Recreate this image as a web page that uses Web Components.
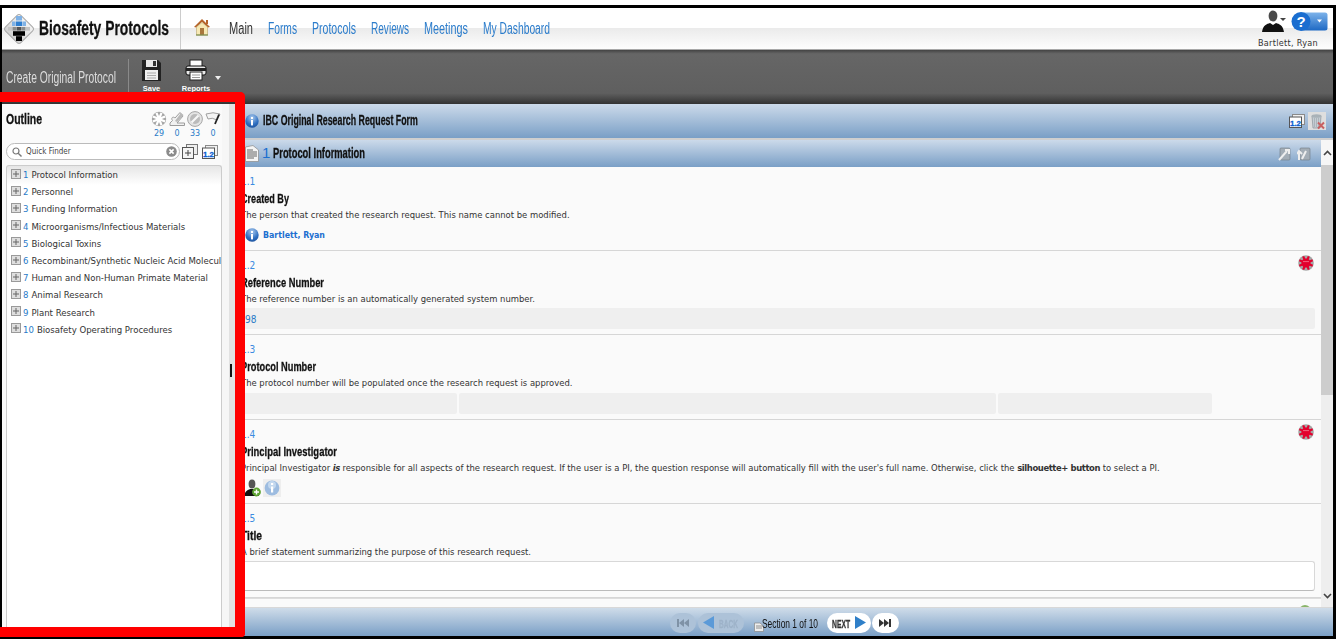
<!DOCTYPE html>
<html>
<head>
<meta charset="utf-8">
<title>Biosafety Protocols</title>
<style>
  html, body { margin: 0; padding: 0; background: #fff; }
  body { font-family: "DejaVu Sans", sans-serif; overflow: hidden; }
</style>
</head>
<body>
<app-shell>
  <top-bar slot="top"></top-bar>
  <action-bar slot="actions"></action-bar>
  <outline-panel slot="side">
    <tree-item num="1" label="Protocol Information"></tree-item>
    <tree-item num="2" label="Personnel"></tree-item>
    <tree-item num="3" label="Funding Information"></tree-item>
    <tree-item num="4" label="Microorganisms/Infectious Materials"></tree-item>
    <tree-item num="5" label="Biological Toxins"></tree-item>
    <tree-item num="6" label="Recombinant/Synthetic Nucleic Acid Molecules"></tree-item>
    <tree-item num="7" label="Human and Non-Human Primate Material"></tree-item>
    <tree-item num="8" label="Animal Research"></tree-item>
    <tree-item num="9" label="Plant Research"></tree-item>
    <tree-item num="10" label="Biosafety Operating Procedures"></tree-item>
  </outline-panel>
  <form-area slot="main">
    <form-row num="1.1" title="Created By" tw="48" desc="The person that created the research request. This name cannot be modified." style="--slot-top:4px">
      <person-value></person-value>
    </form-row>
    <form-row num="1.2" title="Reference Number" tw="83" desc="The reference number is an automatically generated system number." required>
      <field-box width="100%" style="padding:1px 0 0 4px">98</field-box>
    </form-row>
    <form-row num="1.3" title="Protocol Number" tw="75" desc="The protocol number will be populated once the research request is approved." style="--slot-top:3px;--row-h:85px">
      <div style="display:flex;gap:2px;width:971px">
        <field-box width="216px"></field-box>
        <field-box width="537px"></field-box>
        <field-box width="214px"></field-box>
      </div>
    </form-row>
    <form-row num="1.4" title="Principal Investigator" tw="96" required style="--slot-top:3px">
      <span slot="desc">Principal Investigator <b style="letter-spacing:-.5px"><i>is</i></b> responsible for all aspects of the research request. If the user is a PI, the question response will automatically fill with the user's full name. Otherwise, click the <b style="letter-spacing:-.4px">silhouette+ button</b> to select a PI.</span>
      <pi-tools></pi-tools>
    </form-row>
    <form-row num="1.5" title="Title" tw="21" desc="A brief statement summarizing the purpose of this research request." style="--row-h:94px">
      <text-box></text-box>
    </form-row>
  </form-area>
  <page-footer slot="main-foot"></page-footer>
</app-shell>

<script>
const narrow = '"Liberation Sans", sans-serif';
const body = '"DejaVu Sans", sans-serif';

// no condensed face is installed: squeeze the text to the width it has in the screenshot
const measure = document.createElement("canvas").getContext("2d");
class CondText extends HTMLElement {
  constructor() {
    super();
    this.shadow = this.attachShadow({ mode: "open" });
    const font = this.getAttribute("font");
    const w = +this.getAttribute("w");
    measure.font = font;
    const r = w / measure.measureText(this.textContent).width;
    // scaling thins the stems, so bold gets a little stroke back
    const stroke = font.startsWith("bold") ? "-webkit-text-stroke: .3px currentColor;" : "";
    this.shadow.innerHTML = `
    <style>
      :host { display: inline-block; width: ${w}px; white-space: nowrap; flex: none; }
      span { display: inline-block; font: ${font}; ${stroke} transform: scaleX(${r.toFixed(3)}); transform-origin: 0 0; }
    </style>
    <span><slot></slot></span>`;
  }
}
customElements.define("cond-text", CondText);

const spokes = (cx, cy, r, stroke, w, n = 8) => {
  let s = "";
  for (let i = 0; i < n; i++) {
    const a = i * 2 * Math.PI / n + Math.PI / n;
    s += `<line x1="${cx}" y1="${cy}" x2="${(cx + r * Math.cos(a)).toFixed(1)}" y2="${(cy + r * Math.sin(a)).toFixed(1)}" stroke="${stroke}" stroke-width="${w}"/>`;
  }
  return s;
};
const soft = `<defs><filter id="soft" x="-20%" y="-20%" width="140%" height="140%"><feGaussianBlur stdDeviation=".45"/></filter></defs>`;

const icons = {
  logo: `<svg viewBox="0 0 30 32" width="30" height="32">
    <defs><linearGradient id="lg" x1="0" y1="0" x2="0" y2="1"><stop offset="0" stop-color="#f4f4f4"/><stop offset="1" stop-color="#d0d0d0"/></linearGradient></defs>
    <rect x="4" y="5" width="22" height="22" rx="3" transform="rotate(45 15 16)" fill="url(#lg)" stroke="#a9a9a9"/>
    <rect x="12" y="3" width="6" height="4.5" fill="#7fb2e6"/>
    <rect x="8" y="8.5" width="3.6" height="4.5" fill="#7fb2e6"/><rect x="12" y="8.5" width="6" height="4.5" fill="#2f7fd0"/><rect x="18.4" y="8.5" width="3.6" height="4.5" fill="#7fb2e6"/>
    <rect x="4" y="14" width="4" height="3.6" fill="#c4c4c4"/><rect x="8.5" y="14" width="3.5" height="3.6" fill="#8a8a8a"/><rect x="12.5" y="14" width="5" height="3.6" fill="#555"/><rect x="18" y="14" width="3.5" height="3.6" fill="#8a8a8a"/><rect x="22" y="14" width="4" height="3.6" fill="#c4c4c4"/>
    <rect x="9" y="18.2" width="12" height="4.6" fill="#000"/><rect x="12" y="23.2" width="6" height="4.8" fill="#000"/>
  </svg>`,
  home: `<svg viewBox="0 0 18 18" width="18" height="18">
    <path d="M9 1 L1 9 L3 9.5 L9 4 L15 9.5 L17 9 Z" fill="#b5642a"/><rect x="13" y="2" width="2" height="4" fill="#b5642a"/>
    <path d="M3.5 9 L9 4.5 L14.5 9 V17 H3.5 Z" fill="#f7e9b4" stroke="#b8a36a" stroke-width=".6"/>
    <rect x="7" y="10" width="4" height="7" fill="#a9773d"/><rect x="3" y="16.4" width="12" height="1.2" fill="#7c8f52"/>
  </svg>`,
  save: `<svg viewBox="0 0 21 23" width="21" height="23">
    <path d="M1 1 H17 L20 4 V22 H1 Z" fill="#222"/><rect x="5" y="1" width="11" height="7" fill="#e8e8e8"/><rect x="12" y="2" width="3" height="5" fill="#333"/>
    <rect x="4" y="11" width="13" height="10" fill="#f0f0f0"/><path d="M6 14 H15 M6 16.5 H15 M6 19 H15" stroke="#aaa"/>
  </svg>`,
  print: `<svg viewBox="0 0 22 22" width="22" height="22">
    <rect x="5" y="1" width="12" height="7" fill="#fff" stroke="#222"/>
    <rect x="1" y="7" width="20" height="9" rx="2" fill="#e9e9e9" stroke="#111"/><rect x="1" y="9" width="20" height="3" fill="#222"/>
    <rect x="5" y="13" width="12" height="8" fill="#fff" stroke="#222"/><path d="M7 16 H15 M7 18.5 H15" stroke="#999"/>
  </svg>`,
  user: `<svg viewBox="0 0 24 22" width="24" height="22">
    <ellipse cx="11" cy="6" rx="4.4" ry="5.5" fill="#4a4a4a"/><path d="M0 22 C1 15 5 14 8 13 L11 15 L14 13 C17 14 21 15 22 22 Z" fill="#111"/>
    <path d="M18 8 H24 L21 11 Z" fill="#444"/>
  </svg>`,
  help: `<svg viewBox="0 0 37 19" width="37" height="19">
    <defs><linearGradient id="hb" x1="0" y1="0" x2="0" y2="1"><stop offset="0" stop-color="#7db3ea"/><stop offset="1" stop-color="#1e69c4"/></linearGradient></defs>
    <path d="M10 0.5 H34 Q36.5 .5 36.5 3 V16 Q36.5 18.5 34 18.5 H10 Z" fill="url(#hb)"/><circle cx="10" cy="9.5" r="9.5" fill="#1b6ed0"/>
    <text x="10" y="15" text-anchor="middle" font-family="Liberation Sans" font-weight="700" font-size="15" fill="#fff">?</text>
    <path d="M26 7.5 H31 L28.5 10.5 Z" fill="#fff"/>
  </svg>`,
  info: `<svg viewBox="0 0 14 14" width="14" height="14">
    <defs><radialGradient id="ii" cx=".5" cy=".25" r=".85"><stop offset="0" stop-color="#a8c9ee"/><stop offset=".6" stop-color="#2f6fc0"/><stop offset="1" stop-color="#1a4c95"/></radialGradient></defs>
    <circle cx="7" cy="7" r="6.7" fill="url(#ii)"/><rect x="6" y="6" width="2" height="5.4" fill="#fff"/><rect x="6" y="3" width="2" height="2" fill="#fff"/>
  </svg>`,
  infofade: `<svg viewBox="0 0 18 18" width="18" height="18"><rect width="18" height="18" fill="#eee"/>
    <circle cx="9" cy="9" r="7.4" fill="#9dbce0"/><circle cx="9" cy="6" r="4" fill="#c3d8ee"/><rect x="8" y="7.5" width="2.2" height="6" fill="#fff"/><rect x="8" y="4" width="2.2" height="2" fill="#fff"/>
  </svg>`,
  doc: `<svg viewBox="0 0 14 17" width="14" height="17">
    <path d="M.5 2 L8 .5 L13.5 5 V16.5 H.5 Z" fill="#f4f4f4" stroke="#8a8a8a" stroke-width=".7"/>
    <path d="M2 5 H8 M2 7 H12 M2 9 H12 M2 11 H12 M2 13 H9" stroke="#555" stroke-width=".9"/>
  </svg>`,
  number: `<svg viewBox="0 0 16 14" width="16" height="14">
    <rect x="3.5" y=".5" width="12" height="10" fill="#f1f1f1" stroke="#8a8a8a"/><rect x=".5" y="3" width="12" height="10.5" fill="#fff" stroke="#555"/>
    <text x="6.5" y="11.5" text-anchor="middle" font-family="Liberation Sans" font-weight="700" font-size="8" fill="#0b5cd0" stroke="#0b5cd0" stroke-width=".3">1.2</text>
  </svg>`,
  expandbox: `<svg viewBox="0 0 16 15" width="16" height="15">
    <rect x="4.5" y=".5" width="11" height="10" fill="#eee" stroke="#777"/><rect x=".5" y="3.5" width="11" height="11" fill="#f4f4f4" stroke="#555"/>
    <path d="M3 9 H9 M6 6 V12" stroke="#444"/>
  </svg>`,
  trash: `<svg viewBox="0 0 18 18" width="18" height="18"><rect width="18" height="18" fill="#dedede"/>
    <path d="M4 4 H13 L12 16 H5 Z" fill="#c6ced4" stroke="#8b949b" stroke-width=".7"/><ellipse cx="8.5" cy="4" rx="5" ry="1.8" fill="#a9b2b8"/><path d="M6.5 6 V15 M8.5 6 V15 M10.5 6 V15" stroke="#9aa2a8" stroke-width=".6"/>
    <path d="M10 10.5 L16 16.5 M16 10.5 L10 16.5" stroke="#c86060" stroke-width="2"/>
  </svg>`,
  clipa: `<svg viewBox="0 0 14 14" width="14" height="14"><rect x="2" y="1" width="10" height="12" rx="1" fill="#a3adb6" stroke="#707a84" stroke-width=".6"/><path d="M1 13 L9 4 M7 3 H11 V7" stroke="#eee" stroke-width="2" fill="none"/></svg>`,
  clipb: `<svg viewBox="0 0 14 14" width="14" height="14"><rect x="3" y="1" width="10" height="12" rx="1" fill="#a3adb6" stroke="#707a84" stroke-width=".6"/><path d="M2 13 V5 M0 7 L2 4 L5 7 M5 12 L9 4" stroke="#eee" stroke-width="2" fill="none"/></svg>`,
  burst: `<svg viewBox="0 0 16 16" width="16" height="16">${soft}<circle cx="8" cy="8" r="7.2" fill="#a6a6a6" filter="url(#soft)"/><g>${spokes(8, 8, 6.6, "#fff", 2.2)}</g></svg>`,
  sign: `<svg viewBox="0 0 16 16" width="16" height="16">${soft}<g filter="url(#soft)">
    <path d="M1 14.5 H15.5 V12 H8 L14 5 L11 1.5 L6 7 C4 5 1.5 7 3.5 9.5 L1 12 Z" fill="#f1f1f1" stroke="#9c9c9c"/><path d="M12 2 L14.5 4 L8 11 L6 10 Z" fill="#b9b9b9"/></g>
  </svg>`,
  blocked: `<svg viewBox="0 0 16 16" width="16" height="16">${soft}<g filter="url(#soft)"><circle cx="8" cy="8" r="7.4" fill="#e4e4e4" stroke="#a6a6a6"/><circle cx="8" cy="8" r="5" fill="#bbb"/><path d="M4.5 11.5 L11.5 4.5" stroke="#f7f7f7" stroke-width="2.2"/></g></svg>`,
  flag: `<svg viewBox="0 0 16 16" width="16" height="16">${soft}<g filter="url(#soft)"><path d="M1 3 Q8 .5 15 3 L12 9 Q7 6 3 8 Z" fill="#f4f4f4" stroke="#9f9f9f"/><path d="M14 3.5 L10 13" stroke="#222" stroke-width="1.8"/></g></svg>`,
  star: `<svg viewBox="0 0 16 16" width="16" height="16">${soft}<circle cx="8" cy="8" r="7.8" fill="#555" opacity=".5" filter="url(#soft)"/><circle cx="8" cy="8" r="4.6" fill="#e3002d"/>${spokes(8, 8, 7.2, "#e3002d", 2.2, 8)}<path d="M5 6.6 H11" stroke="#f58a9c" stroke-width=".9" opacity=".8"/></svg>`,
  adduser: `<svg viewBox="0 0 17 18" width="17" height="18">
    <ellipse cx="8" cy="5" rx="3.4" ry="4.5" fill="#555"/><path d="M0 17 C1 12 4 11 6 10 L10 10 C12 11 14 12 15 17 Z" fill="#111"/>
    <circle cx="12.5" cy="13" r="4.4" fill="#5da332"/><path d="M10 13 H15 M12.5 10.5 V15.5" stroke="#fff" stroke-width="1.4"/>
  </svg>`,
  search: `<svg viewBox="0 0 10 10" width="10" height="10"><circle cx="4" cy="4" r="3" fill="none" stroke="#777" stroke-width="1.2"/><path d="M6.2 6.2 L9.5 9.5" stroke="#777" stroke-width="1.4"/></svg>`,
  clear: `<svg viewBox="0 0 11 11" width="11" height="11"><circle cx="5.5" cy="5.5" r="5.3" fill="#8b8b8b"/><path d="M3.4 3.4 L7.6 7.6 M7.6 3.4 L3.4 7.6" stroke="#fff" stroke-width="1.6"/></svg>`,
  plus: `<svg viewBox="0 0 10 10" width="10" height="10"><rect x=".5" y=".5" width="9" height="9" fill="#dedede" stroke="#9a9a9a"/><path d="M2 5 H8 M5 2 V8" stroke="#666"/></svg>`,
  first: `<svg viewBox="0 0 12 8" width="12" height="8"><rect x="0" y="0" width="2" height="8" fill="currentColor"/><path d="M7 0 V8 L2 4 Z M12 0 V8 L7 4 Z" fill="currentColor"/></svg>`,
  last: `<svg viewBox="0 0 12 8" width="12" height="8"><rect x="10" y="0" width="2" height="8" fill="currentColor"/><path d="M0 0 V8 L5 4 Z M5 0 V8 L10 4 Z" fill="currentColor"/></svg>`,
  arrowl: `<svg viewBox="0 0 11 13" width="11" height="13"><path d="M11 0 V13 L0 6.5 Z" fill="#5b9ad8"/></svg>`,
  arrowr: `<svg viewBox="0 0 11 13" width="11" height="13"><path d="M0 0 V13 L11 6.5 Z" fill="#2f7fc8"/></svg>`,
  small: `<svg viewBox="0 0 10 12" width="10" height="12"><path d="M.5 3 H6 L9.5 6 V11.5 H.5 Z" fill="#eee" stroke="#888" stroke-width=".7"/><path d="M2 6 H8 M2 8 H8" stroke="#777" stroke-width=".8"/></svg>`,
  greenup: `<svg viewBox="0 0 14 14" width="14" height="14"><circle cx="7" cy="7" r="6" fill="#8ab56a"/><path d="M3.5 7 H10.5" stroke="#e5f0da" stroke-width="1.6"/></svg>`
};

class UiIcon extends HTMLElement {
  constructor() {
    super();
    this.shadow = this.attachShadow({ mode: "open" });
    this.shadow.innerHTML = `<style>:host{display:inline-flex;line-height:0;flex:none}</style>${icons[this.getAttribute("name")] || ""}`;
  }
}
customElements.define("ui-icon", UiIcon);

class AppShell extends HTMLElement {
  constructor() {
    super();
    this.shadow = this.attachShadow({ mode: "open" });
    this.shadow.innerHTML = `
    <style>
      :host { display: block; position: relative; width: 1336px; height: 639px; box-sizing: border-box; padding-top: 5px; }
      .window { box-sizing: border-box; height: 634px; border: solid #000; border-width: 3px 3px 3px 2px; display: flex; flex-direction: column; background: #fafafa; }
      .work { flex: 1; display: flex; min-height: 0; }
      .col { flex: 1; min-width: 0; display: flex; flex-direction: column; }
      ::slotted([slot="main"]) { flex: 1; min-height: 0; }
      /* the red marker that was drawn round the outline in the screenshot */
      .marker { position: absolute; left: 0; top: 92px; width: 245px; height: 545px; box-sizing: border-box; border: solid #f00; border-width: 10px 10px 10px 0; border-radius: 0 5px 4px 0; pointer-events: none; }
    </style>
    <div class="window">
      <slot name="top"></slot>
      <slot name="actions"></slot>
      <div class="work">
        <slot name="side"></slot>
        <div class="col">
          <slot name="main"></slot>
          <slot name="main-foot"></slot>
        </div>
      </div>
    </div>
    <div class="marker"></div>`;
  }
}
customElements.define("app-shell", AppShell);

class TopBar extends HTMLElement {
  constructor() {
    super();
    this.shadow = this.attachShadow({ mode: "open" });
    const nf = `16px Liberation Sans`;
    this.shadow.innerHTML = `
    <style>
      :host { display: flex; align-items: stretch; height: 41px; background: linear-gradient(#fff 0, #fff 48%, #ebebeb 50%, #fdfdfd 100%); border-bottom: 1px solid #a8a8a8; font-family: ${narrow}; }
      .brand { width: 179px; display: flex; align-items: center; padding-left: 2px; box-sizing: border-box; gap: 5px; border-right: 1px solid #ccc; }
      .brand cond-text { color: #111; }
      nav { display: flex; align-items: center; gap: 15px; color: #2b7ccb; padding-left: 12px; }
      nav ui-icon { margin-right: 3px; margin-top: -3px; }
      .m { color: #333; }
      .user { margin-left: auto; width: 75px; display: flex; flex-direction: column; align-items: flex-start; }
      .ic { display: flex; gap: 5px; padding: 2px 0 0 4px; height: 24px; }
      .ic ui-icon:last-child { margin-top: 2px; }
      .name { font: 9px ${body}; font-stretch: condensed; color: #333; white-space: nowrap; margin-top: 4px; letter-spacing: .3px; }
    </style>
    <div class="brand"><ui-icon name="logo"></ui-icon><cond-text w="130" font="bold 20px Liberation Sans">Biosafety Protocols</cond-text></div>
    <nav>
      <ui-icon name="home"></ui-icon>
      <cond-text class="m" w="24" font="${nf}">Main</cond-text>
      <cond-text w="29" font="${nf}">Forms</cond-text>
      <cond-text w="44" font="${nf}">Protocols</cond-text>
      <cond-text w="38" font="${nf}">Reviews</cond-text>
      <cond-text w="44" font="${nf}">Meetings</cond-text>
      <cond-text w="67" font="${nf}">My Dashboard</cond-text>
    </nav>
    <div class="user">
      <div class="ic"><ui-icon name="user"></ui-icon><ui-icon name="help"></ui-icon></div>
      <div class="name">Bartlett, Ryan</div>
    </div>`;
  }
}
customElements.define("top-bar", TopBar);

class ActionBar extends HTMLElement {
  constructor() {
    super();
    this.shadow = this.attachShadow({ mode: "open" });
    this.shadow.innerHTML = `
    <style>
      :host { display: flex; height: 54px; box-sizing: border-box; align-items: flex-start; background: linear-gradient(#434343 0, #666 7%, #5f5f5f 80%, #333 100%); color: #ddd; }
      .t { margin: 18px 0 0 4px; width: 122px; white-space: nowrap; }
      .sep { width: 1px; height: 36px; background: #8a8a8a; margin-top: 9px; }
      .btn { display: flex; flex-direction: column; align-items: center; font: bold 7.5px "Liberation Sans", sans-serif; color: #fff; }
      .btn ui-icon { height: 24px; }
      .btn span { margin-top: 1px; }
      .tri { width: 0; height: 0; border: 3px solid transparent; border-top: 4px solid #eee; margin: 26px 0 0 5px; }
    </style>
    <div class="t"><cond-text w="110" font="16px Liberation Sans">Create Original Protocol</cond-text></div>
    <div class="sep"></div>
    <div class="btn" style="margin:9px 0 0 12px;width:21px"><ui-icon name="save"></ui-icon><span>Save</span></div>
    <div class="btn" style="margin:9px 0 0 20px;width:28px"><ui-icon name="print"></ui-icon><span>Reports</span></div>
    <div class="tri"></div>`;
  }
}
customElements.define("action-bar", ActionBar);

class OutlinePanel extends HTMLElement {
  constructor() {
    super();
    this.shadow = this.attachShadow({ mode: "open" });
    const stat = (name, n) => `<div class="stat"><ui-icon name="${name}"></ui-icon><span>${n}</span></div>`;
    this.shadow.innerHTML = `
    <style>
      :host { display: flex; width: 233px; flex: none; background: #fafafa; }
      .inner { width: 220px; box-sizing: border-box; padding: 5px 0 0 4px; display: flex; flex-direction: column; }
      .head { display: flex; justify-content: space-between; height: 34px; }
      .head cond-text { color: #111; }
      .stats { display: flex; margin-top: 2px; }
      .stat { width: 18px; display: flex; flex-direction: column; align-items: center; font: 8px/9px ${body}; color: #2a7ac7; }
      .stat span { margin-top: 2px; }
      .find { display: flex; align-items: center; height: 17px; margin-bottom: 5px; gap: 2px; }
      .q { width: 174px; height: 17px; box-sizing: border-box; border: 1px solid #bbb; border-radius: 9px; background: #fff; display: flex; align-items: center; padding: 0 2px 0 5px; gap: 4px; font: 8px ${body}; font-stretch: condensed; color: #444; }
      .q em { font-style: normal; flex: 1; }
      .find ui-icon:last-child { margin-left: 2px; }
      .tree { flex: 1; box-sizing: border-box; border: 1px solid #ccc; border-bottom: 0; border-radius: 3px 3px 0 0; background: linear-gradient(#e6e6e6, #fff) 0 0 / 100% 19px no-repeat #fff; overflow: hidden; }
      .strip { width: 7px; background: #f6f6f6; }
      .split { width: 6px; background: #e2e2e2; display: flex; align-items: center; }
      .split i { width: 2px; height: 13px; background: #111; margin-left: 1px; }
    </style>
    <div class="inner">
      <div class="head"><cond-text w="36" font="bold 14px Liberation Sans">Outline</cond-text><div class="stats">${stat("burst", 29)}${stat("sign", 0)}${stat("blocked", 33)}${stat("flag", 0)}</div></div>
      <div class="find">
        <div class="q"><ui-icon name="search"></ui-icon><em>Quick Finder</em><ui-icon name="clear"></ui-icon></div>
        <ui-icon name="expandbox"></ui-icon><ui-icon name="number"></ui-icon>
      </div>
      <div class="tree"><slot></slot></div>
    </div>
    <div class="strip"></div>
    <div class="split"><i></i></div>`;
  }
}
customElements.define("outline-panel", OutlinePanel);

class TreeItem extends HTMLElement {
  constructor() {
    super();
    this.shadow = this.attachShadow({ mode: "open" });
    this.shadow.innerHTML = `
    <style>
      :host { display: flex; align-items: center; height: 17.2px; padding-left: 4px; white-space: nowrap; overflow: hidden; font: 9.5px ${body}; font-stretch: condensed; color: #333; }
      ui-icon { margin-right: 2px; margin-top: -2px; }
      .n { color: #2a7ac7; margin-right: 3px; }
    </style>
    <ui-icon name="plus"></ui-icon><span class="n">${this.getAttribute("num")}</span><span>${this.getAttribute("label")}</span>`;
  }
}
customElements.define("tree-item", TreeItem);

class FormArea extends HTMLElement {
  constructor() {
    super();
    this.shadow = this.attachShadow({ mode: "open" });
    this.shadow.innerHTML = `
    <style>
      :host { display: flex; flex-direction: column; min-height: 0; }
      .band { background: linear-gradient(#ccdaea, #7a9fc6); display: flex; align-items: center; color: #111; }
      .form { height: 34px; padding: 0 7px 0 10px; border-bottom: 2px solid #cfcfcf; }
      .form > ui-icon:first-child { margin-right: 4px; }
      .form > cond-text { margin-bottom: 3px; }
      .sec { height: 27px; padding: 0 10px 0 10px; box-sizing: border-box; }
      .sec > cond-text { margin-bottom: 2px; }
      .sec .n { color: #1c6fd0; margin: 0 3px 2px 3px; font: 15px "Liberation Sans", sans-serif; }
      .r { margin-left: auto; display: flex; align-items: center; gap: 3px; }
      .below { flex: 1; display: flex; min-height: 0; }
      .left { flex: 1; min-width: 0; display: flex; flex-direction: column; }
      .rows { flex: 1; min-height: 0; overflow: hidden; background: #fafafa; }
      .bar { width: 12px; background: #eee; display: flex; flex-direction: column; align-items: center; justify-content: space-between; position: relative; }
      .bar .thumb { position: absolute; left: 0; right: 0; top: 25px; height: 230px; background: #cdcdcd; }
      .cap { width: 12px; height: 25px; background: #f6f6f6; display: flex; align-items: center; justify-content: center; }
      .cap.d { background: none; height: 22px; }
      .cap svg { display: block; }
      .next { height: 9px; overflow: hidden; display: flex; justify-content: flex-end; padding: 5px 9px 0 0; box-sizing: border-box; border-top: 1px solid #ddd; }
    </style>
    <div class="band form"><ui-icon name="info"></ui-icon><cond-text w="155" font="bold 14px Liberation Sans">IBC Original Research Request Form</cond-text>
      <div class="r"><ui-icon name="number"></ui-icon><ui-icon name="trash"></ui-icon></div></div>
    <div class="below">
      <div class="left">
        <div class="band sec"><ui-icon name="doc"></ui-icon><span class="n">1</span><cond-text w="92" font="bold 14px Liberation Sans">Protocol Information</cond-text>
          <div class="r" style="gap:5px"><ui-icon name="clipa"></ui-icon><ui-icon name="clipb"></ui-icon></div></div>
        <div class="rows"><slot></slot><div class="next"><ui-icon name="greenup"></ui-icon></div></div>
      </div>
      <div class="bar">
        <div class="thumb"></div>
        <div class="cap" style="position:relative"><svg width="9" height="6" viewBox="0 0 9 6"><path d="M1 5 L4.5 1.5 L8 5" fill="none" stroke="#444" stroke-width="1.6"/></svg></div>
        <div class="cap d"><svg width="9" height="6" viewBox="0 0 9 6"><path d="M1 1 L4.5 4.5 L8 1" fill="none" stroke="#444" stroke-width="1.6"/></svg></div>
      </div>
    </div>`;
  }
}
customElements.define("form-area", FormArea);

class FormRow extends HTMLElement {
  constructor() {
    super();
    this.shadow = this.attachShadow({ mode: "open" });
    const desc = this.getAttribute("desc") || "";
    const star = this.hasAttribute("required") ? `<ui-icon name="star"></ui-icon>` : "";
    this.shadow.innerHTML = `
    <style>
      :host { display: block; box-sizing: border-box; height: var(--row-h, 84px); padding: 8px 6px 0 6px; border-bottom: 1px solid #d6d6d6; white-space: nowrap; overflow: hidden; }
      .num { display: flex; justify-content: space-between; height: 13px; font: 10px/13px ${body}; font-stretch: condensed; color: #3b8ae0; }
      .num ui-icon { margin: -4px 1px 0 0; }
      .title { height: 14px; line-height: 14px; color: #111; margin-top: 3px; }
      .desc { font: 9.4px/14px ${body}; font-stretch: condensed; color: #333; margin-top: 3px; }
      .val { margin-top: var(--slot-top, 2px); }
    </style>
    <div class="num"><span>${this.getAttribute("num")}</span>${star}</div>
    <div class="title"><cond-text w="${this.getAttribute("tw")}" font="bold 13.5px/14px Liberation Sans">${this.getAttribute("title")}</cond-text></div>
    <div class="desc"><slot name="desc">${desc}</slot></div>
    <div class="val"><slot></slot></div>`;
    this.removeAttribute("title");
  }
}
customElements.define("form-row", FormRow);

class FieldBox extends HTMLElement {
  constructor() {
    super();
    this.shadow = this.attachShadow({ mode: "open" });
    this.shadow.innerHTML = `
    <style>
      :host { display: flex; align-items: center; box-sizing: border-box; height: 21px; width: ${this.getAttribute("width") || "100%"}; background: #efefef; border-radius: 2px; font: 10px ${body}; font-stretch: condensed; color: #2a7ac7; }
    </style>
    <slot></slot>`;
  }
}
customElements.define("field-box", FieldBox);

class PersonValue extends HTMLElement {
  constructor() {
    super();
    this.shadow = this.attachShadow({ mode: "open" });
    this.shadow.innerHTML = `
    <style>
      :host { display: flex; align-items: center; gap: 4px; height: 18px; padding-left: 4px; font: bold 8.75px ${body}; font-stretch: condensed; color: #1c6fd0; }
    </style>
    <ui-icon name="info"></ui-icon><span>Bartlett, Ryan</span>`;
  }
}
customElements.define("person-value", PersonValue);

class PiTools extends HTMLElement {
  constructor() {
    super();
    this.shadow = this.attachShadow({ mode: "open" });
    this.shadow.innerHTML = `
    <style>:host { display: flex; align-items: center; gap: 2px; height: 20px; padding-left: 3px; }</style>
    <ui-icon name="adduser"></ui-icon><ui-icon name="infofade"></ui-icon>`;
  }
}
customElements.define("pi-tools", PiTools);

class TextBox extends HTMLElement {
  constructor() {
    super();
    this.shadow = this.attachShadow({ mode: "open" });
    this.shadow.innerHTML = `
    <style>:host { display: block; height: 30px; box-sizing: border-box; background: #fff; border: 1px solid #d8d8d8; border-bottom-color: #bbb; border-radius: 3px; }</style>`;
  }
}
customElements.define("text-box", TextBox);

class PageFooter extends HTMLElement {
  constructor() {
    super();
    this.shadow = this.attachShadow({ mode: "open" });
    this.shadow.innerHTML = `
    <style>
      :host { display: flex; justify-content: center; align-items: center; height: 29px; box-sizing: border-box; padding-top: 1px; background: linear-gradient(#cfdce9, #7a9fc6); border-top: 1px solid #d8d8d8; }
      .pill { display: flex; align-items: center; justify-content: center; box-sizing: border-box; height: 20px; border-radius: 10px; background: #fff; color: #333; gap: 5px; }
      .off { background: #adc2d8; color: #7f92a6; }
      .sec { display: flex; align-items: flex-end; color: #111; white-space: nowrap; margin: 0 9px 0 10px; }
      .sec ui-icon { margin-right: -2px; }
    </style>
    <div class="pill off" style="width:26px"><ui-icon name="first"></ui-icon></div>
    <div class="pill off" style="width:46px;margin-left:2px;color:#9db2c8"><ui-icon name="arrowl"></ui-icon><cond-text w="19" font="bold 11px Liberation Sans">BACK</cond-text></div>
    <div class="sec"><ui-icon name="small"></ui-icon><cond-text w="56" font="13px Liberation Sans">Section 1 of 10</cond-text></div>
    <div class="pill" style="width:44px"><cond-text w="18" font="bold 11px Liberation Sans">NEXT</cond-text><ui-icon name="arrowr"></ui-icon></div>
    <div class="pill" style="width:27px;margin-left:1px"><ui-icon name="last"></ui-icon></div>`;
  }
}
customElements.define("page-footer", PageFooter);
</script>
</body>
</html>
